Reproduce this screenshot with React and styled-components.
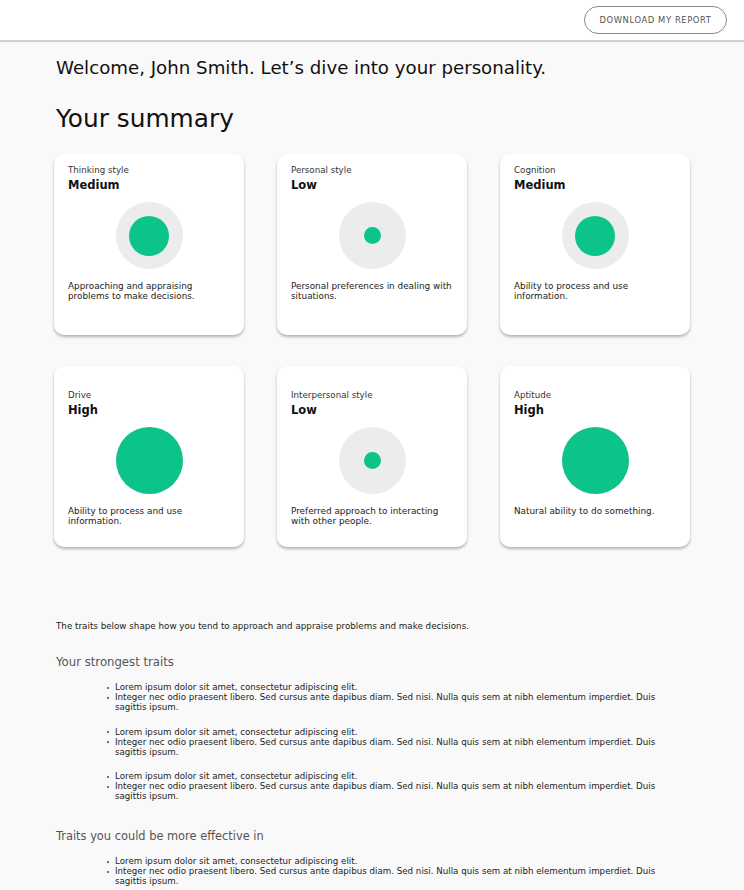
import React from "react";
import styled, { createGlobalStyle } from "styled-components";

const Global = createGlobalStyle`
  html, body { margin: 0; padding: 0; background: #f9f9f9; }
  body { font-family: "DejaVu Sans", "Open Sans", sans-serif; color: #1a1a1a; }
  * { box-sizing: border-box; }
`;

const Header = styled.header`
  height: 40px;
  background: #fff;
  display: flex;
  align-items: center;
  justify-content: flex-end;
  padding-right: 17px;
  box-shadow: 0 2px 0 #d0d0d0, 0 3px 2px rgba(0, 0, 0, 0.04);
  position: relative;
`;

const DownloadButton = styled.button`
  width: 143px;
  height: 28px;
  border: 1px solid #8a8a8a;
  border-radius: 14px;
  background: #fff;
  font-family: inherit;
  font-size: 8.4px;
  letter-spacing: 0.6px;
  color: #555;
  text-transform: uppercase;
  padding: 0;
  cursor: pointer;
`;

const Main = styled.main`
  padding: 16px 55px 0 54px;
`;

const Welcome = styled.h1`
  margin: 0 0 0 2px;
  font-size: 18.2px;
  line-height: 24px;
  font-weight: 500;
  color: #111;
`;

const Title = styled.h2`
  margin: 24px 0 0 2px;
  font-size: 24.8px;
  line-height: 30px;
  font-weight: 500;
  color: #111;
`;

const Grid = styled.div`
  margin-top: 20px;
  display: grid;
  grid-template-columns: repeat(3, 190px);
  column-gap: 33px;
  row-gap: 31px;
`;

const Card = styled.div`
  height: 181px;
  background: #fff;
  border-radius: 10px;
  box-shadow: 0 2px 3px rgba(0, 0, 0, 0.28);
  padding: ${(p) => p.$top}px 14px 0 14px;
  display: flex;
  flex-direction: column;
`;

const Label = styled.div`
  font-size: 8.7px;
  line-height: 10px;
  color: #333;
`;

const Value = styled.div`
  margin-top: 3px;
  font-size: 11.5px;
  line-height: 14px;
  font-weight: 600;
  color: #111;
`;

const Ring = styled.div`
  margin: 10px auto 0;
  width: 67px;
  height: 67px;
  border-radius: 50%;
  background: #ececec;
  display: flex;
  align-items: center;
  justify-content: center;
`;

const Dot = styled.div`
  width: ${(p) => p.$size}px;
  height: ${(p) => p.$size}px;
  border-radius: 50%;
  background: #0cc48a;
`;

const Desc = styled.p`
  margin: 12px -2px 0 0;
  font-size: 8.85px;
  line-height: 10px;
  color: #222;
`;

const Intro = styled.p`
  margin: 74px 0 0 2px;
  font-size: 8.75px;
  line-height: 10px;
  color: #222;
`;

const SectionTitle = styled.h3`
  margin: ${(p) => p.$top}px 0 0 2px;
  font-size: ${(p) => p.$size}px;
  line-height: 14px;
  font-weight: 400;
  color: #555;
`;

const Groups = styled.div`
  margin-top: 13px;
  display: flex;
  flex-direction: column;
  gap: 14.5px;
`;

const Group = styled.ul`
  margin: 0;
  padding: 0 0 0 52px;
  list-style: none;
  width: 620px;
`;

const Item = styled.li`
  position: relative;
  padding-left: 9px;
  font-size: 8.7px;
  line-height: 10px;
  color: #222;
  &::before {
    content: "";
    position: absolute;
    left: 1px;
    top: 4.5px;
    width: 2px;
    height: 2px;
    border-radius: 50%;
    background: #444;
  }
`;

const cards = [
  { label: "Thinking style", value: "Medium", size: 40, desc: "Approaching and appraising problems to make decisions." },
  { label: "Personal style", value: "Low", size: 17, desc: "Personal preferences in dealing with situations." },
  { label: "Cognition", value: "Medium", size: 40, desc: "Ability to process and use information." },
  { label: "Drive", value: "High", size: 67, desc: "Ability to process and use information." },
  { label: "Interpersonal style", value: "Low", size: 17, desc: "Preferred approach to interacting with other people." },
  { label: "Aptitude", value: "High", size: 67, desc: "Natural ability to do something." },
];

const itemA = "Lorem ipsum dolor sit amet, consectetur adipiscing elit.";
const itemB =
  "Integer nec odio praesent libero. Sed cursus ante dapibus diam. Sed nisi. Nulla quis sem at nibh elementum imperdiet. Duis sagittis ipsum.";

function TraitGroup() {
  return (
    <Group>
      <Item>{itemA}</Item>
      <Item>{itemB}</Item>
    </Group>
  );
}

export default function App() {
  return (
    <>
      <Global />
      <Header>
        <DownloadButton>Download my report</DownloadButton>
      </Header>
      <Main>
        <Welcome>Welcome, John Smith. Let’s dive into your personality.</Welcome>
        <Title>Your summary</Title>
        <Grid>
          {cards.map((c, i) => (
            <Card key={c.label} $top={i < 3 ? 11 : 24}>
              <Label>{c.label}</Label>
              <Value>{c.value}</Value>
              <Ring>
                <Dot $size={c.size} />
              </Ring>
              <Desc>{c.desc}</Desc>
            </Card>
          ))}
        </Grid>
        <Intro>The traits below shape how you tend to approach and appraise problems and make decisions.</Intro>
        <SectionTitle $top={24} $size={11.7}>Your strongest traits</SectionTitle>
        <Groups>
          <TraitGroup />
          <TraitGroup />
          <TraitGroup />
        </Groups>
        <SectionTitle $top={28} $size={11.4}>Traits you could be more effective in</SectionTitle>
        <Groups>
          <TraitGroup />
        </Groups>
      </Main>
    </>
  );
}
